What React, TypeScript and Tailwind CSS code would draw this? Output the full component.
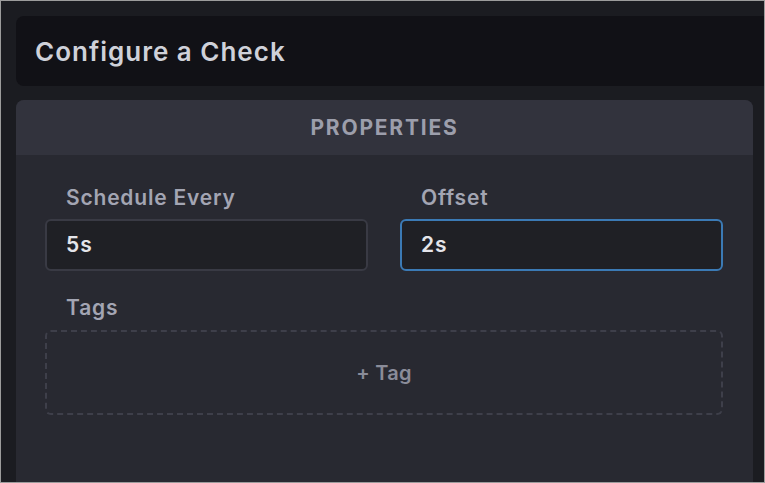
export default function App() {
  return (
    <div className="w-[765px] h-[483px] overflow-hidden border border-[#9c9c9c] bg-[#1b1c21] font-['Inter',sans-serif]">
      <div className="pl-[15px] pt-[15px] flex flex-col gap-[14px]">
        <div className="h-[70px] rounded-l-lg bg-[#111116] flex items-center pl-[19px]">
          <h1 className="text-[26px] font-semibold text-[#cfd1d9] tracking-[1px]">
            Configure a Check
          </h1>
        </div>

        <div className="mr-[11px] h-[400px] rounded-t-lg bg-[#282931] overflow-hidden">
          <div className="h-[55px] bg-[#32333d] flex items-center justify-center">
            <span className="text-[21px] font-bold uppercase tracking-[1.8px] text-[#9c9eab]">
              Properties
            </span>
          </div>

          <div className="pl-[29px] pr-[30px] pt-[29px] flex flex-col">
            <div className="grid grid-cols-2 gap-[32px]">
              <Field label="Schedule Every" value="5s" />
              <Field label="Offset" value="2s" focused />
            </div>

            <div className="mt-[23px] pl-[21px] text-[21px] font-semibold tracking-[0.8px] text-[#a3a5b3] leading-[28px]">
              Tags
            </div>
            <div className="mt-[8px] h-[85px] rounded-md border-2 border-dashed border-[#3e3f4a] flex items-center justify-center">
              <span className="text-[20px] font-semibold tracking-[0.3px] text-[#8a8c99]">+ Tag</span>
            </div>
          </div>
        </div>
      </div>
    </div>
  )
}

function Field({
  label,
  value,
  focused,
}: {
  label: string
  value: string
  focused?: boolean
}) {
  return (
    <div className="flex flex-col">
      <label className="pl-[21px] text-[21px] font-semibold tracking-[0.8px] text-[#a3a5b3] leading-[28px]">
        {label}
      </label>
      <div
        className={
          focused
            ? "mt-[7px] h-[52px] rounded-md border-2 border-[#3b7ab5] bg-[#1f2025] flex items-center pl-[19px]"
            : "mt-[7px] h-[52px] rounded-md border-2 border-[#393a44] bg-[#1f2025] flex items-center pl-[19px]"
        }
      >
        <span className="text-[21px] font-semibold tracking-[1px] text-[#e4e5ea]">{value}</span>
      </div>
    </div>
  )
}
